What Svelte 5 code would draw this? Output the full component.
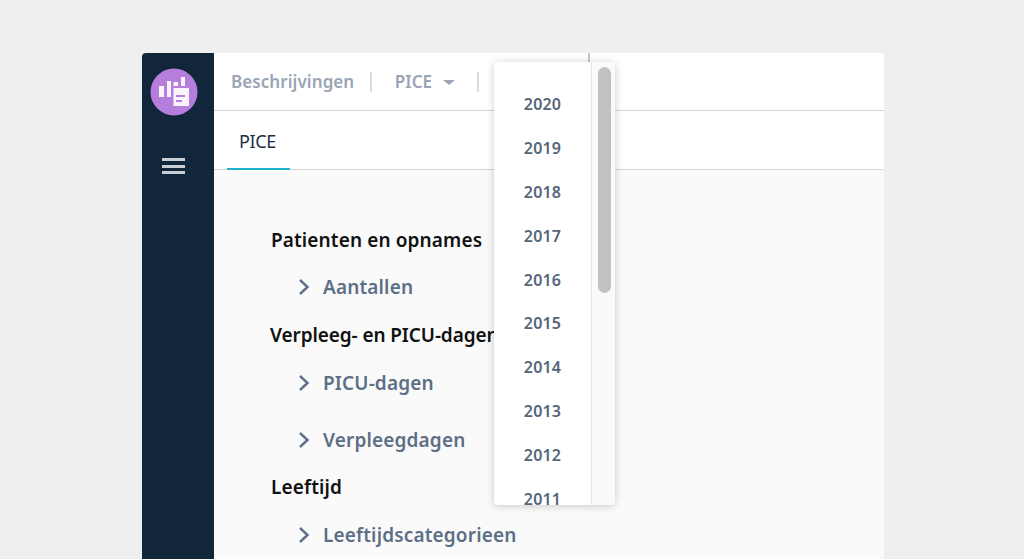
<script>
  const years = [2020, 2019, 2018, 2017, 2016, 2015, 2014, 2013, 2012, 2011];
</script>

<div class="page">
  <div class="card">
    <aside class="side">
      <div class="logo">
        <svg width="48" height="48" viewBox="0 0 48 48">
          <circle cx="24" cy="24" r="23.5" fill="#b57edc" />
          <g fill="#fff" opacity="0.92">
            <rect x="9" y="18" width="5" height="11" />
            <rect x="17" y="13" width="4" height="16" />
            <rect x="23.500" y="14" width="4.500" height="4" />
            <rect x="31" y="9" width="4" height="9" />
            <path d="M23.500 20h15.500v18H23.500z" />
          </g>
          <rect x="26" y="27" width="9" height="2" fill="#b57edc" />
          <rect x="26" y="32" width="6" height="2" fill="#b57edc" />
        </svg>
      </div>
      <div class="burger"><span></span><span></span><span></span></div>
    </aside>
    <main class="main">
      <header class="top">
        <span class="crumb">Beschrijvingen</span>
        <span class="sep"></span>
        <span class="crumb">PICE</span>
        <span class="caret"></span>
        <span class="sep"></span>
      </header>
      <nav class="tabs">
        <div class="tab">PICE</div>
      </nav>
      <section class="content">
        <h3 class="first">Patienten en opnames</h3>
        <div class="item a1"><svg class="chev" width="12" height="18" viewBox="0 0 12 18"><path d="M2 2l7.500 7L2 16" /></svg>Aantallen</div>
        <h3 class="h2">Verpleeg- en PICU-dagen</h3>
        <div class="item a2"><svg class="chev" width="12" height="18" viewBox="0 0 12 18"><path d="M2 2l7.500 7L2 16" /></svg>PICU-dagen</div>
        <div class="item a3"><svg class="chev" width="12" height="18" viewBox="0 0 12 18"><path d="M2 2l7.500 7L2 16" /></svg>Verpleegdagen</div>
        <h3 class="h3">Leeftijd</h3>
        <div class="item a4"><svg class="chev" width="12" height="18" viewBox="0 0 12 18"><path d="M2 2l7.500 7L2 16" /></svg>Leeftijdscategorieen</div>
      </section>
    </main>
    <span class="vline"></span>
    <div class="menu">
      <ul class="list">
        {#each years as y}
          <li>{y}</li>
        {/each}
      </ul>
      <div class="track"><div class="thumb"></div></div>
    </div>
  </div>
</div>

<style>
  :global(body) {
    margin: 0;
    background: #efefef;
  }
  .page {
    height: 559px;
    overflow: hidden;
    padding: 53px 140px 0 142px;
    box-sizing: border-box;
    font-family: "Noto Sans", "Open Sans", sans-serif;
  }
  .card {
    position: relative;
    display: flex;
    height: 506px;
    border-radius: 4px 4px 0 0;
    overflow: hidden;
    background: #fff;
  }
  .side {
    width: 72px;
    flex: none;
    background: #12263b;
    display: flex;
    flex-direction: column;
    align-items: center;
    padding: 15px 10px 0 0;
    box-sizing: border-box;
  }
  .logo {
    height: 48px;
    margin-left: 1px;
  }
  .burger {
    margin-top: 42px;
    display: flex;
    flex-direction: column;
    gap: 3.500px;
  }
  .burger span {
    display: block;
    width: 23px;
    height: 3px;
    background: #c9ced4;
  }
  .main {
    flex: 1;
    min-width: 0;
    display: flex;
    flex-direction: column;
  }
  .top {
    height: 58px;
    box-sizing: border-box;
    border-bottom: 1.500px solid #d6d6d6;
    display: flex;
    align-items: center;
    padding-left: 17px;
    color: #9aa5b4;
    font-size: 17px;
    font-weight: 600;
    letter-spacing: 0.07px;
  }
  .sep {
    width: 1.500px;
    height: 20px;
    background: #d8dce0;
    margin-left: 16px;
    margin-right: 23px;
  }
  .caret {
    width: 0;
    height: 0;
    border-left: 6px solid transparent;
    border-right: 6px solid transparent;
    border-top: 5px solid #9aa5b4;
    margin-left: 11px;
    margin-top: 2px;
    margin-right: 6px;
  }
  .tabs {
    height: 59px;
    box-sizing: border-box;
    border-bottom: 1.500px solid #d6d6d6;
    padding-left: 13px;
    display: flex;
    align-items: flex-start;
  }
  .tab {
    width: 63px;
    height: 59px;
    flex: none;
    position: relative;
    z-index: 1;
    box-sizing: border-box;
    border-bottom: 2px solid #1fb6c9;
    padding: 18px 2px 0 0;
    text-align: center;
    font-size: 18px;
    line-height: 24px;
    color: #1c2f45;
    letter-spacing: -0.3px;
  }
  .content {
    flex: 1;
    background: #fafafa;
    padding-left: 57px;
    padding-top: 57px;
  }
  h3 {
    margin: 0;
    font-size: 19px;
    line-height: 26px;
    font-weight: 600;
    color: #111;
    letter-spacing: 0.12px;
    white-space: nowrap;
  }
  .item {
    display: flex;
    align-items: center;
    gap: 13px;
    padding-left: 27px;
    font-size: 19px;
    line-height: 26px;
    font-weight: 600;
    color: #5d6f86;
    letter-spacing: 0.15px;
    white-space: nowrap;
  }
  .chev {
    fill: none;
    stroke: #5d6f86;
    stroke-width: 2.400;
  }
  .a1 { margin-top: 21px; }
  h3.h2 { margin: 22px 0 0 -1px; letter-spacing: -0.1px; }
  .a2 { margin-top: 22px; }
  .a3 { margin-top: 31px; }
  .h3 { margin-top: 21px; }
  .a4 { margin-top: 22px; }
  .vline {
    position: absolute;
    left: 446px;
    top: 0;
    width: 1.500px;
    height: 12px;
    background: #c8c8c8;
  }
  .menu {
    position: absolute;
    left: 352px;
    top: 9px;
    width: 121px;
    height: 443px;
    background: #fff;
    border-radius: 4px;
    box-shadow: 0 1px 8px rgba(0, 0, 0, 0.2);
    display: flex;
    overflow: hidden;
  }
  .list {
    list-style: none;
    margin: 0;
    padding: 30px 0 0;
    flex: 1;
    text-align: center;
    font-size: 16px;
    line-height: 24px;
    font-weight: 600;
    color: #55657a;
    letter-spacing: 0.2px;
  }
  .list li {
    height: 24px;
    margin-bottom: 19.900px;
  }
  .track {
    width: 24px;
    flex: none;
    background: #fafafa;
    border-left: 1.500px solid #e8e8e8;
    box-sizing: border-box;
    padding: 5px 4px 0 6px;
  }
  .thumb {
    width: 13px;
    height: 226px;
    border-radius: 7px;
    background: #c1c1c1;
  }
</style>
